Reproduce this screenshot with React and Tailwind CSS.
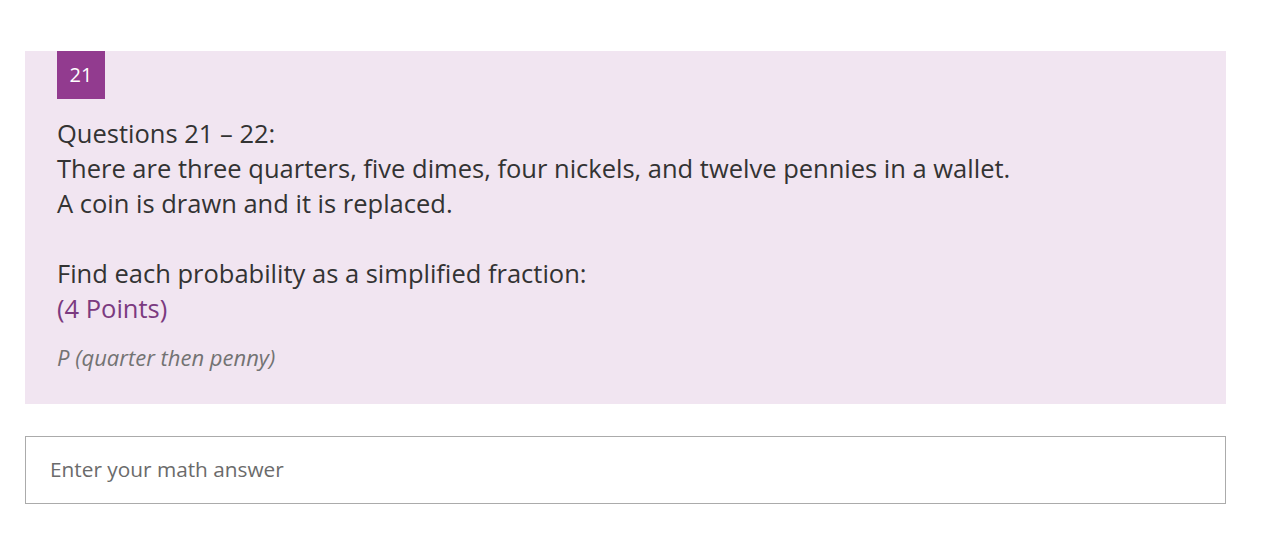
export default function App() {
  const font = { fontFamily: '"Open Sans", "Noto Sans", sans-serif' };
  return (
    <div className="w-[1268px] h-[536px] bg-white pt-[51px] px-[25px] box-border" style={font}>
      <div className="w-[1201px] bg-[#f1e5f1] pl-8 pr-8 pb-[32px]">
        <div className="w-12 h-12 bg-[#923b8f] text-white text-[20px] flex items-center justify-center">21</div>
        <div className="mt-[17px] text-[25.5px] leading-[35px] text-[#333333]">
          <div>Questions 21 – 22:</div>
          <div>There are three quarters, five dimes, four nickels, and twelve pennies in a wallet.</div>
          <div>A coin is drawn and it is replaced.</div>
          <div className="h-[35px]"></div>
          <div>Find each probability as a simplified fraction:</div>
          <div className="text-[#7b3a80]">(4 Points)</div>
        </div>
        <div className="mt-[16px] text-[22px] leading-[30px] italic text-[#737373]">P (quarter then penny)</div>
      </div>
      <div className="mt-8 w-[1201px] h-[68px] border border-[#ababab] flex items-center pl-6 text-[20.8px] text-[#6b6b6b]">
        Enter your math answer
      </div>
    </div>
  );
}
